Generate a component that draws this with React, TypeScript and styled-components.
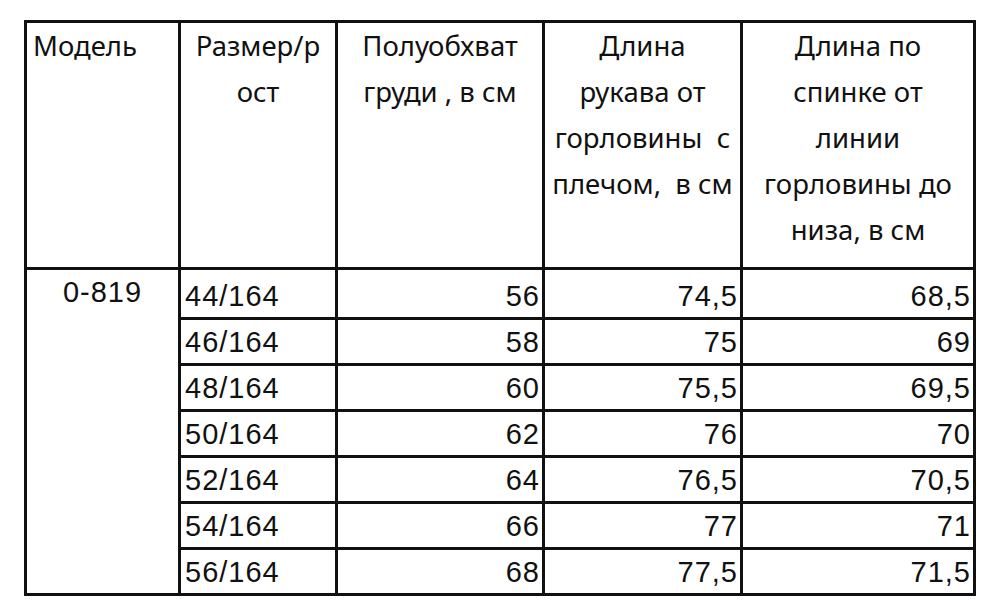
import styled, { createGlobalStyle } from "styled-components";

const GlobalStyle = createGlobalStyle`
  html, body {
    margin: 0;
    padding: 0;
    background: #fff;
  }
`;

const Page = styled.div`
  padding: 20px 0 0 24px;
  width: 1000px;
  height: 610px;
  box-sizing: border-box;
`;

const Table = styled.table`
  border-collapse: collapse;
  table-layout: fixed;
  width: 949px;
  color: #111;
`;

const HeadCell = styled.th<{ $align?: string }>`
  border: 3px solid #111;
  height: 244px;
  padding: 0 6px;
  vertical-align: top;
  text-align: ${(p) => p.$align || "center"};
  font-family: "Noto Sans", "Open Sans", sans-serif;
  font-weight: 400;
  font-size: 27.5px;
  line-height: 46px;
  white-space: nowrap;
`;

const ModelCell = styled.td`
  border: 3px solid #111;
  vertical-align: top;
  text-align: center;
  padding: 8px 0 0 0;
  font-family: "Liberation Sans", Arial, sans-serif;
  font-size: 29px;
  line-height: 29px;
  letter-spacing: 1px;
`;

const DataRow = styled.tr<{ $first?: boolean }>`
  height: ${(p) => (p.$first ? "50px" : "46px")};
`;

const SizeCell = styled.td`
  border: 3px solid #111;
  vertical-align: bottom;
  text-align: left;
  padding: 0 0 6px 4px;
  font-family: "Liberation Sans", Arial, sans-serif;
  font-size: 29px;
  line-height: 29px;
  letter-spacing: 1px;
`;

const NumCell = styled(SizeCell)`
  text-align: right;
  padding: 0 2px 6px 0;
`;

const rows = [
  ["44/164", "56", "74,5", "68,5"],
  ["46/164", "58", "75", "69"],
  ["48/164", "60", "75,5", "69,5"],
  ["50/164", "62", "76", "70"],
  ["52/164", "64", "76,5", "70,5"],
  ["54/164", "66", "77", "71"],
  ["56/164", "68", "77,5", "71,5"],
];

export default function App() {
  return (
    <Page>
      <GlobalStyle />
      <Table>
        <colgroup>
          <col style={{ width: 154 }} />
          <col style={{ width: 157 }} />
          <col style={{ width: 207 }} />
          <col style={{ width: 198 }} />
          <col style={{ width: 233 }} />
        </colgroup>
        <thead>
          <tr>
            <HeadCell $align="left">Модель</HeadCell>
            <HeadCell>
              Размер/р
              <br />
              ост
            </HeadCell>
            <HeadCell>
              Полуобхват
              <br />
              груди , в см
            </HeadCell>
            <HeadCell>
              Длина
              <br />
              рукава от
              <br />
              горловины&nbsp; с
              <br />
              плечом,&nbsp; в см
            </HeadCell>
            <HeadCell>
              Длина по
              <br />
              спинке от
              <br />
              линии
              <br />
              горловины до
              <br />
              низа, в см
            </HeadCell>
          </tr>
        </thead>
        <tbody>
          {rows.map((r, i) => (
            <DataRow key={r[0]} $first={i === 0}>
              {i === 0 && <ModelCell rowSpan={7}>0-819</ModelCell>}
              <SizeCell>{r[0]}</SizeCell>
              <NumCell>{r[1]}</NumCell>
              <NumCell>{r[2]}</NumCell>
              <NumCell>{r[3]}</NumCell>
            </DataRow>
          ))}
        </tbody>
      </Table>
    </Page>
  );
}
